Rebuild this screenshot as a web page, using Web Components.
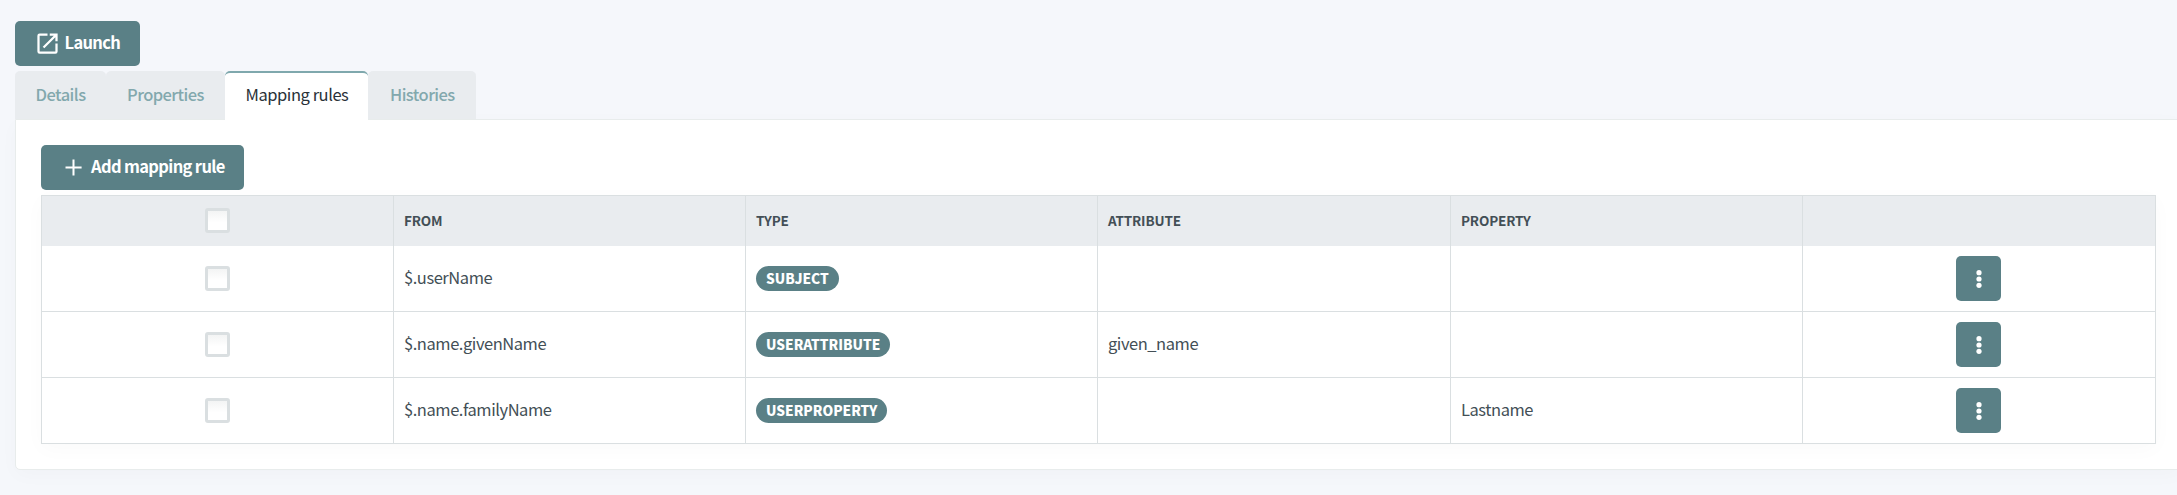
<!DOCTYPE html>
<html lang="en">
<head>
<meta charset="utf-8">
<title>Mapping rules</title>
<style>
html, body { margin: 0; height: 100%; background: #f5f7fb; }
body { overflow: hidden; font: 16.5px/24px "Noto Sans CJK SC", "Open Sans", sans-serif; letter-spacing: -.45px; color: #434f56; }
</style>
</head>
<body>
<mapping-page></mapping-page>
<script>
const ICONS = {
  launch: '<svg width="27" height="27" viewBox="0 0 24 24"><path fill="#fff" d="M14 3v2h3.59l-9.83 9.83 1.41 1.41L19 6.41V10h2V3zM19 19H5V5h7V3H5a2 2 0 0 0-2 2v14a2 2 0 0 0 2 2h14a2 2 0 0 0 2-2v-7h-2z"/></svg>',
  plus: '<svg width="27" height="27" viewBox="0 0 24 24"><path fill="#fff" d="M19.2 12.8h-6.3v6.3h-1.8v-6.3H4.9v-1.7h6.2V4.9h1.8v6.2h6.3z"/></svg>',
  dots: '<svg width="7" height="20" viewBox="0 0 7 20"><g fill="#fff"><circle cx="4" cy="3.7" r="2.6"/><circle cx="4" cy="10" r="2.6"/><circle cx="4" cy="16.3" r="2.6"/></g></svg>'
};
function define(name, html) {
  customElements.define(name, class extends HTMLElement {
    constructor() {
      super();
      this.attachShadow({ mode: 'open' }).innerHTML = html;
      const icon = this.shadowRoot.querySelector('[data-icon]');
      if (icon) icon.innerHTML = ICONS[this.getAttribute('icon')] || '';
    }
  });
}
define('ui-button', `<style>
:host { display: inline-flex; align-items: center; box-sizing: border-box; height: 45px; border-radius: 5px; background: #5a8086; color: #fff; font-weight: 700; letter-spacing: -.65px; white-space: nowrap; }
span { display: flex; }
b { font-weight: inherit; padding-bottom: 4px; }
:host([icon="dots"]) b { display: none; }
</style><span data-icon></span><b><slot></slot></b>`);
define('ui-tab', `<style>
:host { display: block; box-sizing: border-box; height: 48px; padding: 9px 0 0 20.5px; border-top: 2px solid #e9ecef; border-radius: 5px 5px 0 0; background: #e9ecef; color: #82a8ad; font-weight: 500; letter-spacing: -.56px; white-space: nowrap; }
:host([active]) { height: 49px; background: #fff; border-top-color: #7fa8ad; color: #2a3238; font-weight: 400; letter-spacing: -.45px; }
</style><slot></slot>`);
define('ui-check', `<style>
:host { display: block; box-sizing: border-box; width: 25px; height: 25px; border: 3px solid #dadfe1; border-radius: 3px; background: linear-gradient(#f3f4f4, #fff 60%); }
</style>`);
define('ui-badge', `<style>
:host { display: block; box-sizing: border-box; height: 25px; padding: 0 10px; border-radius: 13px; background: #5a8086; color: #fff; font-size: 13.7px; font-weight: 900; letter-spacing: 0; line-height: 24px; white-space: nowrap; }
</style><slot></slot>`);
define('ui-cell', `<style>
:host { display: flex; align-items: center; box-sizing: border-box; min-width: 0; padding-left: 10px; border-left: 1px solid #dadfe1; }
:host([text]) { padding-bottom: 3px; }
:host([center]) { justify-content: center; padding: 0; }
</style><slot></slot>`);
define('ui-row', `<style>
:host { display: grid; grid-template-columns: 352px 352px 352px 353px 352px 353px; box-sizing: border-box; height: 66px; border-bottom: 1px solid #dadfe1; }
:host([head]) { height: 50px; border-bottom: 0; background: #e9ecef; font-size: 13.5px; font-weight: 700; letter-spacing: -.15px; }
</style><slot></slot>`);
define('ui-table', `<style>
:host { display: block; box-sizing: border-box; width: 2115px; border-top: 1px solid #dadfe1; border-right: 1px solid #dadfe1; background: #fff; box-shadow: 0 5px 20px rgba(0,0,0,.025); }
</style><slot></slot>`);
define('ui-panel', `<style>
:host { display: block; box-sizing: border-box; width: 2167px; height: 351px; padding: 25px; border: 1px solid #e8ecec; border-radius: 0 5px 5px 5px; background: #fff; box-shadow: 0 5px 20px rgba(0,0,0,.025); }
</style><slot></slot>`);
const kebab = '<ui-cell center class="last"><ui-button class="k" icon="dots"></ui-button></ui-cell>';
const check = '<ui-cell center class="first"><ui-check></ui-check></ui-cell>';
const row = (from, type, attr, prop) => `<ui-row>${check}<ui-cell text>${from}</ui-cell><ui-cell><ui-badge>${type}</ui-badge></ui-cell><ui-cell text>${attr}</ui-cell><ui-cell text>${prop}</ui-cell>${kebab}</ui-row>`;
define('mapping-page', `<style>
:host { display: block; padding: 21px 0 0 15px; }
.launch { display: flex; width: 125px; padding-left: 18.5px; gap: 4px; }
.tabs { display: grid; grid-template-columns: 91px 119px 143px 108px; height: 48px; margin-top: 5px; }
.tabs ui-tab { position: relative; }
.tabs ui-tab:nth-child(2) { padding-left: 21px; }
.tabs ui-tab:nth-child(4) { padding-left: 22px; }
.add { display: flex; width: 203px; padding-left: 18.5px; gap: 4.5px; margin-bottom: 5px; }
.k { width: 45px; justify-content: center; }
.last { padding-right: 2px; }
ui-row[head] ui-cell[text] { padding-bottom: 2px; }
ui-row[head] .first { padding-bottom: 1px; }
</style>
<ui-button class="launch" icon="launch">Launch</ui-button>
<div class="tabs"><ui-tab>Details</ui-tab><ui-tab>Properties</ui-tab><ui-tab active>Mapping rules</ui-tab><ui-tab>Histories</ui-tab></div>
<ui-panel>
<ui-button class="add" icon="plus">Add mapping rule</ui-button>
<ui-table>
<ui-row head>${check}<ui-cell text>FROM</ui-cell><ui-cell text>TYPE</ui-cell><ui-cell text>ATTRIBUTE</ui-cell><ui-cell text>PROPERTY</ui-cell><ui-cell></ui-cell></ui-row>
${row('$.userName', 'SUBJECT', '', '')}
${row('$.name.givenName', 'USERATTRIBUTE', 'given_name', '')}
${row('$.name.familyName', 'USERPROPERTY', '', 'Lastname')}
</ui-table>
</ui-panel>`);
</script>
</body>
</html>
